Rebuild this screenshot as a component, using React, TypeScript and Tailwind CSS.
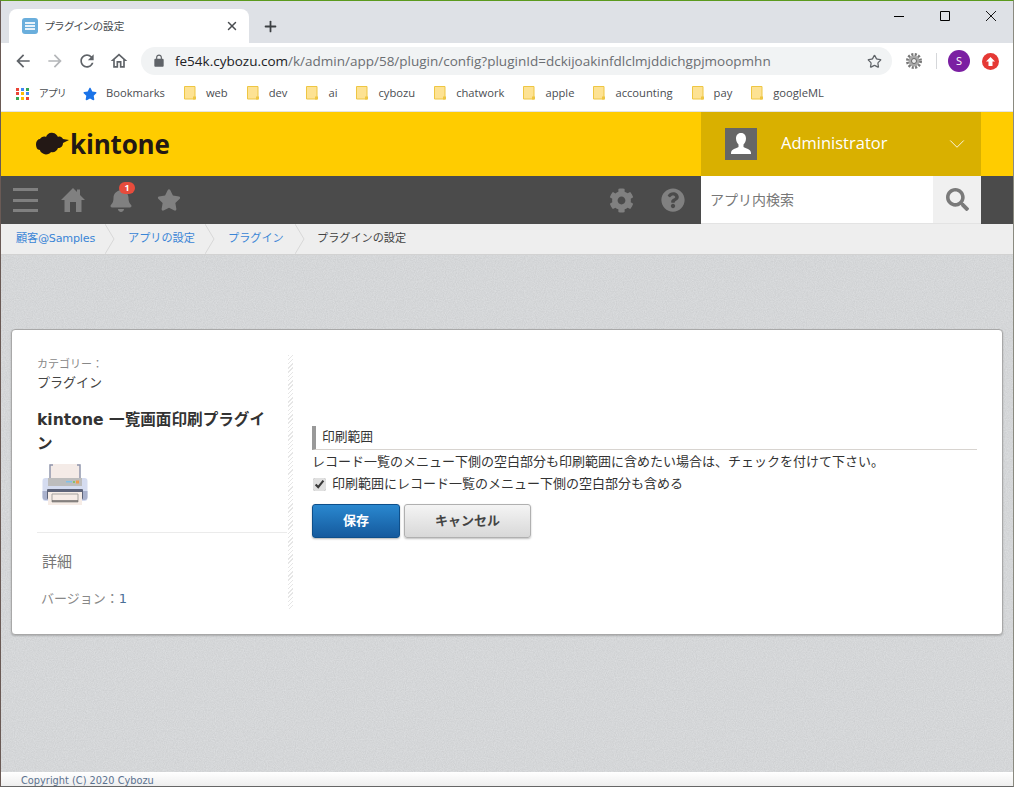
import React from "react";
import { X, Plus, Star, ChevronDown } from "lucide-react";
import { FaBell, FaStar, FaCog, FaQuestionCircle, FaSearch } from "react-icons/fa";

const ui = "font-['Open_Sans','Noto_Sans_CJK_JP',sans-serif]";
const jp = "font-['DejaVu_Sans','Noto_Sans_CJK_JP',sans-serif]";
const palt = "[font-feature-settings:'palt']";

const Mi = ({ d, size, className }: { d: string; size: number; className?: string }) => (
  <svg width={size} height={size} viewBox="0 0 24 24" fill="currentColor" className={`shrink-0 ${className ?? ""}`}>
    <path d={d} />
  </svg>
);

const Folder = () => (
  <svg width="12" height="14" viewBox="0 0 12 14" className="shrink-0">
    <path d="M.5.5h10.500v12.500H.5z" fill="#fde293" stroke="#eec643" />
    <path d="M9 10.500h3v3H9z" fill="#eec643" />
  </svg>
);

const Bm = ({ name }: { name: string }) => (
  <div className="flex items-center gap-[10px] ml-[19px]">
    <Folder />
    <span>{name}</span>
  </div>
);

const Apps = () => {
  const c = ["#ea4335", "#4285f4", "#34a853", "#ea4335", "#fbbc05", "#4285f4", "#34a853", "#fbbc05", "#ea4335"];
  return (
    <div className="grid grid-cols-3 gap-[1.500px] w-[13px]">
      {c.map((x, i) => (
        <svg key={i} width="3" height="3" className="block"><rect width="3" height="3" fill={x} /></svg>
      ))}
    </div>
  );
};

const Cloud = () => (
  <svg width="33" height="24" viewBox="0 0 33 24" className="shrink-0">
    <path d="M0 12c0-3 2-5 4-5 1-2 4-3 6-2 1-3 4-5 7-4 2 0 4 2 5 4 2-1 4 0 5 2l6 1-6 3c0 3-2 5-5 5-1 3-4 5-7 4-1 2-5 3-7 2-3-1-4-3-4-4-3 0-4-3-4-6z" fill="#231815" />
  </svg>
);

const Crumb = ({ text, w, link = true, extra = "" }: { text: string; w: string; link?: boolean; extra?: string }) => (
  <div className={`relative flex items-center h-full shrink-0 ${w}`}>
    <span className={`pt-[1px] ${link ? "text-[#3a85d6]" : "text-[#444]"} ${extra}`}>{text}</span>
    {link && (
      <svg width="10" height="30" viewBox="0 0 10 30" className="absolute right-0 top-0">
        <path d="M0 0l9 15L0 30" fill="none" stroke="#d8d8d8" />
      </svg>
    )}
  </div>
);

const Printer = () => (
  <svg width="46" height="43" viewBox="0 0 46 43" className="block">
    <path d="M8 1h30v16H8z" fill="#f4ebe7" />
    <path d="M8 15V2h3M38 15V2h-3" stroke="#9096ad" strokeWidth="1.500" fill="none" />
    <rect x="0.500" y="15" width="45" height="23" rx="3" fill="#d5dcf0" />
    <path d="M6 15h34v8H6z" fill="#bdbdbd" />
    <path d="M24 18h6v1.500h-6z" fill="#7fc0ea" />
    <path d="M31 18h2v2h-2z" fill="#8cbf6a" />
    <path d="M34 17.500h3v3h-3z" fill="#f09a4a" />
    <path d="M.5 28h45v6a3 3 0 0 1-3 3h-39a3 3 0 0 1-3-3z" fill="#a9b1cc" />
    <rect x="5" y="26" width="36" height="10" fill="#5e6479" rx="1" />
    <path d="M6 29h34v13H6z" fill="#f6ece6" />
    <path d="M10 31h26v8H10z" fill="none" stroke="#a5a29e" />
    <path d="M10 38h26" stroke="#6c6a68" strokeWidth="1.500" />
  </svg>
);

export default function App() {
  return (
    <div className={`w-[1014px] h-[787px] overflow-hidden flex flex-col border-t border-t-[#5b9a1e] border-l border-l-[#6a5a55] border-r border-r-[#8a8a80] border-b border-b-[#666] ${ui}`}>
      {/* tab strip */}
      <div className="h-[42px] shrink-0 bg-[#dee1e6] flex items-end pl-2 relative">
        <div className="w-[240px] h-[34px] bg-white rounded-t-lg flex items-center pl-[13px] pr-[10px] text-[10.700px] text-[#45494d]">
          <svg width="16" height="16" viewBox="0 0 16 16" className="shrink-0">
            <rect width="16" height="16" rx="3" fill="#6aaedc" />
            <path d="M3 4h10v2H3zM3 7h10v2H3zM3 10h10v2H3z" fill="#e8f2fa" />
          </svg>
          <span className={`ml-[7px] flex-1 pt-[1px] ${palt}`}>プラグインの設定</span>
          <X size={14} strokeWidth={2.500} className="text-[#4a4d51]" />
        </div>
        <Plus size={17} strokeWidth={2.500} className="text-[#3c4043] ml-[13px] mb-[8px]" />
        <div className="ml-auto flex items-center self-start h-[29px] pr-[17px] gap-[36px]">
          <svg width="10" height="10" viewBox="0 0 10 10"><path d="M0 5.500h10" stroke="#000" /></svg>
          <svg width="10" height="10" viewBox="0 0 10 10"><path d="M.5.5h9v9h-9z" fill="none" stroke="#000" /></svg>
          <svg width="10" height="10" viewBox="0 0 10 10"><path d="M0 0l10 10M10 0L0 10" stroke="#000" strokeWidth="0.900" /></svg>
        </div>
      </div>
      {/* toolbar */}
      <div className="h-[32px] shrink-0 bg-white flex items-center text-[#5f6368] pt-[4px]">
        <Mi size={20} className="ml-[12px]" d="M20 11H7.830l5.590-5.590L12 4l-8 8 8 8 1.410-1.410L7.830 13H20v-2z" />
        <Mi size={20} className="ml-[12px] text-[#b4b6b9]" d="M12 4l-1.410 1.410L16.170 11H4v2h12.170l-5.580 5.590L12 20l8-8z" />
        <Mi size={20} className="ml-[12px]" d="M17.650 6.350C16.200 4.900 14.210 4 12 4c-4.420 0-7.990 3.580-7.990 8s3.570 8 7.990 8c3.730 0 6.840-2.550 7.730-6h-2.080c-.82 2.330-3.040 4-5.650 4-3.310 0-6-2.690-6-6s2.690-6 6-6c1.660 0 3.140.69 4.220 1.780L13 11h7V4l-2.350 2.350z" />
        <Mi size={20} className="ml-[12px]" d="M12 5.690l5 4.500V18h-2v-6H9v6H7v-7.810l5-4.500M12 3L2 12h3v8h6v-6h2v6h6v-8h3L12 3z" />
        <div className="ml-[12px] w-[751px] h-[28px] shrink-0 rounded-full bg-[#f1f3f4] flex items-center pl-[11px] pr-[10px] text-[13.500px]">
          <Mi size={14} d="M18 8h-1V6c0-2.760-2.240-5-5-5S7 3.240 7 6v2H6c-1.100 0-2 .9-2 2v10c0 1.100.9 2 2 2h12c1.100 0 2-.9 2-2V10c0-1.100-.9-2-2-2zM9 6c0-1.660 1.340-3 3-3s3 1.340 3 3v2H9V6z" />
          <span className="ml-[9px] text-[#202124]">fe54k.cybozu.com</span>
          <span className="text-[#6b6e72]">/k/admin/app/58/plugin/config?pluginId=dckijoakinfdlclmjddichgpjmoopmhn</span>
          <Star size={15} strokeWidth={2} className="ml-auto" />
        </div>
        <svg width="16" height="16" viewBox="0 0 16 16" className="ml-[14px] shrink-0">
          <circle cx="8" cy="8" r="6.500" fill="none" stroke="#777" strokeWidth="3" strokeDasharray="2 1.400" />
          <circle cx="8" cy="8" r="5.500" fill="#a8a8a8" />
          <circle cx="8" cy="8" r="2.500" fill="#eee" stroke="#666" />
        </svg>
        <div className="w-px h-[16px] bg-[#d5d7da] ml-[14px]" />
        <div className="ml-[11px] w-[22px] h-[22px] rounded-full bg-[#7b1fa2] text-white text-[11px] flex items-center justify-center">S</div>
        <div className="ml-[12px] w-[17px] h-[17px] rounded-full bg-[#e53935] flex items-center justify-center">
          <svg width="9" height="9" viewBox="0 0 9 9"><path d="M4.500 0L9 4.500H6.500V9h-4V4.500H0z" fill="#fff" /></svg>
        </div>
      </div>
      {/* bookmarks */}
      <div className="h-[37px] shrink-0 bg-white flex items-center text-[11.200px] text-[#4a4d51] border-b border-b-[#e4e4e4] pt-[1px]">
        <div className="ml-[15px]"><Apps /></div>
        <span className={`ml-[10px] w-[27px] shrink-0 text-[10px] ${palt}`}>アプリ</span>
        <FaStar size={14} className="ml-[17px] text-[#1a73e8]" />
        <span className="ml-[9px]">Bookmarks</span>
        <Bm name="web" />
        <Bm name="dev" />
        <Bm name="ai" />
        <Bm name="cybozu" />
        <Bm name="chatwork" />
        <Bm name="apple" />
        <Bm name="accounting" />
        <Bm name="pay" />
        <Bm name="googleML" />
      </div>
      {/* kintone header */}
      <div className="h-[64px] shrink-0 bg-[#ffcc00] flex">
        <div className="w-[700px] flex items-center pl-[35px] gap-[1px]">
          <Cloud />
          <span className="font-bold text-[26px] leading-none text-[#231815] tracking-[-0.2px]">kintone</span>
        </div>
        <div className="w-[280px] bg-[#d9b000] flex items-center pl-[24px] text-white">
          <div className="w-[32px] h-[32px] bg-[#666] flex items-center justify-center">
            <svg width="24" height="26" viewBox="0 0 24 26"><path d="M12 2c3.500 0 5 2.500 5 5.500 0 3-1.500 5-2.500 6v2.500c2 1.500 7.500 2 7.500 6v1H2v-1c0-4 5.500-4.500 7.500-6v-2.500c-1-1-2.500-3-2.500-6C7 4.500 8.500 2 12 2z" fill="#fff" /></svg>
          </div>
          <span className="ml-[24px] text-[16.500px] pb-[2px]">Administrator</span>
          <ChevronDown size={26} strokeWidth={0.800} className="ml-auto mr-[11px]" />
        </div>
      </div>
      {/* gray bar */}
      <div className="h-[48px] shrink-0 bg-[#4b4b4b] flex items-center text-[#808080]">
        <div className="ml-[12px] w-[25px] h-[24px] flex flex-col justify-between">
          <div className="h-[3px] bg-[#808080]" />
          <div className="h-[3px] bg-[#808080]" />
          <div className="h-[3px] bg-[#808080]" />
        </div>
        <svg width="24" height="24" viewBox="0 0 24 24" className="ml-[23px] shrink-0" fill="currentColor">
          <path d="M12 0L16 4V1.500H19V7L24 12H20.500V24H15V14H9V24H3.500V12H0Z" />
        </svg>
        <div className="relative ml-[24px]">
          <FaBell size={24} />
          <span className="absolute -top-[6px] left-[10px] w-[16px] h-[12px] rounded-full bg-[#e74c3c] text-white text-[9px] leading-[12px] text-center font-bold">1</span>
        </div>
        <FaStar size={24} className="ml-[24px]" />
        <FaCog size={25} className="ml-auto" />
        <FaQuestionCircle size={24} className="ml-[27px]" />
        <div className="ml-[16px] w-[232px] h-full bg-white flex items-center pl-[9px] text-[14px] text-[#777] border-b border-b-[#e3e3e3]">アプリ内検索</div>
        <div className="w-[48px] h-full bg-[#f0f0f0] flex items-center justify-center border-b border-b-[#e3e3e3]">
          <FaSearch size={23} className="text-[#7a7a7a]" />
        </div>
        <div className="w-[32px] shrink-0" />
      </div>
      {/* breadcrumb */}
      <div className={`h-[31px] shrink-0 bg-[#eeeeee] border-b border-b-[#d2d2d2] flex items-center pl-[15px] text-[11.150px] ${jp}`}>
        <Crumb text="顧客@Samples" w="w-[99px]" extra="tracking-[-0.2px]" />
        <Crumb text="アプリの設定" w="w-[100px] pl-[13px]" />
        <Crumb text="プラグイン" w="w-[90px] pl-[13px]" />
        <Crumb text="プラグインの設定" w="w-[130px] pl-[12px]" link={false} />
      </div>
      {/* body */}
      <div className={`relative flex-1 min-h-0 bg-[#dcdee0] pt-[74px] pl-[10px] pr-[10px] ${jp}`}>
        <svg className="absolute inset-0 w-full h-full pointer-events-none" aria-hidden="true">
          <filter id="grain" colorInterpolationFilters="sRGB" x="0" y="0" width="100%" height="100%">
            <feTurbulence type="fractalNoise" baseFrequency="0.9" numOctaves="2" seed="3" />
            <feColorMatrix type="matrix" values="1 0 0 0 0  1 0 0 0 0  1 0 0 0 0  0 0 0 0 0.08" />
          </filter>
          <rect width="100%" height="100%" filter="url(#grain)" />
        </svg>
        <div className="relative h-[306px] bg-white rounded-[4px] border border-[#a8a8a8] shadow-[0_1px_2px_rgba(0,0,0,0.2)] flex pl-[25px] pt-[25px] pb-[25px]">
          <div className="w-[250px] shrink-0 flex flex-col">
            <div className="text-[11px] leading-[16px] text-[#888] mt-[2px]">カテゴリー：</div>
            <div className="text-[13px] leading-[20px] text-[#444]">プラグイン</div>
            <div className="mt-[15px] pr-[18px] text-[15.600px] leading-[24px] font-bold text-[#333]">kintone 一覧画面印刷プラグイン</div>
            <div className="mt-[7px] ml-[5px]"><Printer /></div>
            <div className="mt-[26px] border-t border-t-[#ebebeb] pt-[19px] pl-[5px] text-[15px] leading-[20px] text-[#777]">詳細</div>
            <div className="mt-[17px] pl-[4px] text-[13px] leading-[20px] text-[#888]">バージョン：<span className="text-[#4a6f96]">1</span></div>
          </div>
          <div className="ml-[1px] w-[5px] shrink-0 bg-[repeating-linear-gradient(135deg,#e6e6e6_0,#e6e6e6_1px,#ffffff_1px,#ffffff_3px)]" />
          <div className="flex-1 pl-[19px] pr-[25px] pt-[71px] text-[13px] text-[#333]">
            <div className="border-l-[4px] border-l-[#999] border-b border-b-[#d8d4d0] h-[24px] pl-[6px] leading-[22px] text-[12.750px]">印刷範囲</div>
            <div className="mt-[3px] leading-[18px] whitespace-nowrap">レコード一覧のメニュー下側の空白部分も印刷範囲に含めたい場合は、チェックを付けて下さい。</div>
            <label className="mt-[3px] flex items-center h-[20px]">
              <input type="checkbox" defaultChecked className="ml-[1px] w-[13px] h-[13px] accent-[#e0e0e0]" />
              <span className="ml-[6px]">印刷範囲にレコード一覧のメニュー下側の空白部分も含める</span>
            </label>
            <div className="mt-[10px] flex gap-[4px]">
              <button className="w-[88px] h-[34px] rounded-[3px] border border-[#0d4f8b] bg-gradient-to-b from-[#2a88cf] to-[#155a9e] text-white font-bold text-[13px] shadow-[0_1px_2px_rgba(0,0,0,0.3)]">保存</button>
              <button className="w-[127px] h-[34px] rounded-[3px] border border-[#b0b0b0] bg-gradient-to-b from-[#f4f4f4] to-[#d8d8d8] text-[#444] font-bold text-[13px] shadow-[0_1px_2px_rgba(0,0,0,0.25)]">キャンセル</button>
            </div>
          </div>
        </div>
      </div>
      {/* footer */}
      <div className={`h-[14px] shrink-0 bg-gradient-to-b from-white to-[#eeeeee] pl-[20px] text-[9.800px] leading-[17px] text-[#5b7290] ${jp}`}>Copyright (C) 2020 Cybozu</div>
    </div>
  );
}
